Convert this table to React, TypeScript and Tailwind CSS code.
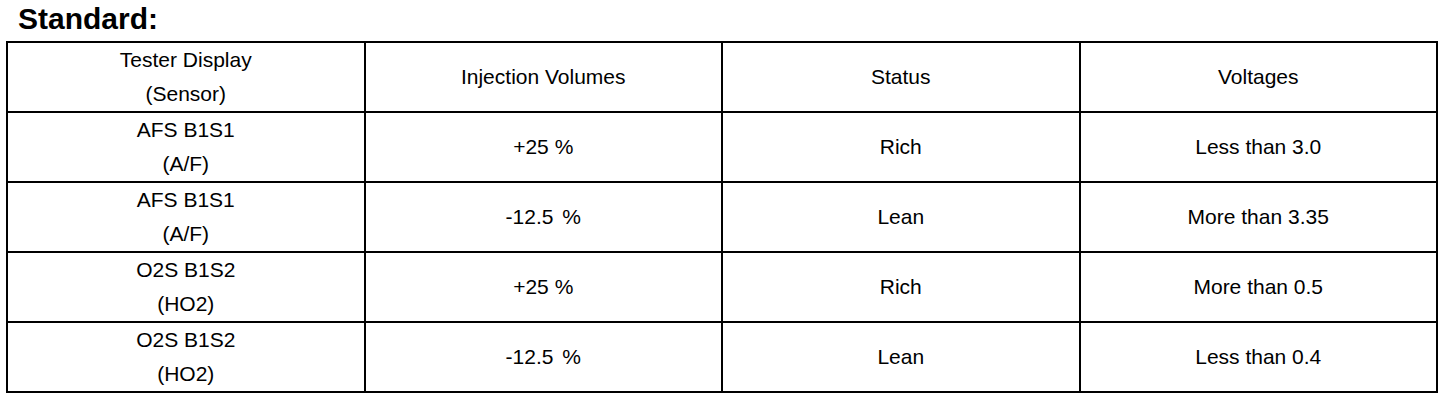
import React from 'react';

interface Row {
  sensor: [string, string];
  volume: string;
  status: string;
  voltage: string;
}

const rows: Row[] = [
  { sensor: ['AFS B1S1', '(A/F)'], volume: '+25', status: 'Rich', voltage: 'Less than 3.0' },
  { sensor: ['AFS B1S1', '(A/F)'], volume: '-12.5', status: 'Lean', voltage: 'More than 3.35' },
  { sensor: ['O2S B1S2', '(HO2)'], volume: '+25', status: 'Rich', voltage: 'More than 0.5' },
  { sensor: ['O2S B1S2', '(HO2)'], volume: '-12.5', status: 'Lean', voltage: 'Less than 0.4' },
];

const cell = 'border-2 border-black text-center align-middle h-[70px] p-0';

const App = () => {
  return (
    <div className="w-[1456px] h-[400px] bg-white text-black font-['Liberation_Sans',Arial,sans-serif] px-[6px]">
      <h1 className="pl-[12px] text-[30px] font-bold leading-[37px]">Standard:</h1>
      <table className="mt-[4px] w-[1432px] table-fixed border-collapse text-[21px] leading-[34px]">
        <thead>
          <tr>
            <th className={`${cell} font-normal`}>
              Tester Display
              <br />
              (Sensor)
            </th>
            <th className={`${cell} font-normal`}>Injection Volumes</th>
            <th className={`${cell} font-normal`}>Status</th>
            <th className={`${cell} font-normal`}>Voltages</th>
          </tr>
        </thead>
        <tbody>
          {rows.map((row, i) => (
            <tr key={i}>
              <td className={cell}>
                {row.sensor[0]}
                <br />
                {row.sensor[1]}
              </td>
              <td className={cell}>
                {row.volume}{' '}
                {/* the -12.5 rows have a slightly wider gap before % */}
                <span className={row.volume === '-12.5' ? 'ml-[3px]' : ''}>%</span>
              </td>
              <td className={cell}>{row.status}</td>
              <td className={cell}>{row.voltage}</td>
            </tr>
          ))}
        </tbody>
      </table>
    </div>
  );
};

export default App;
